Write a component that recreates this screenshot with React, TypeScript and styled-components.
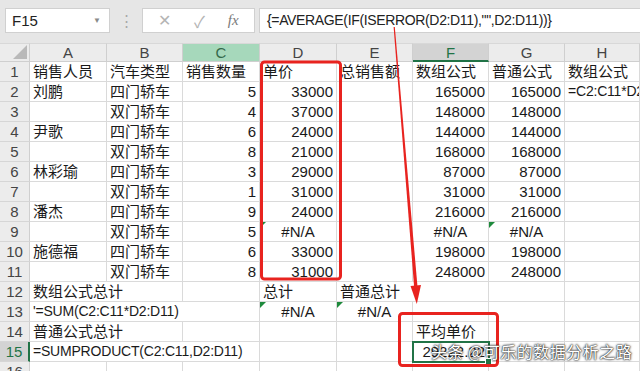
import styled, { createGlobalStyle } from "styled-components";

const GlobalStyle = createGlobalStyle`
	body {
		margin: 0;
		background: #ffffff;
		font-family: "Liberation Sans", "Noto Sans CJK SC", sans-serif;
	}
`;

const Page = styled.div`
	position: relative;
	width: 640px;
	height: 371px;
	overflow: hidden;
	background: #ffffff;
`;

// Formula bar on top
const TopBar = styled.div`
	display: flex;
	align-items: flex-start;
	height: 43px;
	padding: 8px 0 0 5px;
	box-sizing: border-box;
	background: #e6e6e6;
`;

const NameBox = styled.div`
	display: flex;
	align-items: center;
	justify-content: space-between;
	width: 105px;
	height: 25px;
	padding: 0 8px 0 6px;
	box-sizing: border-box;
	background: #fff;
	border: 1px solid #d0d0d0;
	font-size: 15px;
	color: #222;
`;

const Caret = styled.span`
	font-size: 8px;
	color: #8a8a8a;
`;

const Dots = styled.div`
	width: 32px;
	height: 25px;
	display: flex;
	align-items: center;
	justify-content: center;
	color: #a8a8a8;
	font-size: 15px;
`;

const FuncBox = styled.div`
	display: flex;
	align-items: center;
	justify-content: space-around;
	width: 113px;
	height: 25px;
	padding: 0 4px;
	box-sizing: border-box;
	background: #fff;
	border: 1px solid #d0d0d0;
	color: #b4b4b4;
	font-size: 16px;
`;

const Fx = styled.span`
	font-family: "Liberation Serif", serif;
	font-style: italic;
	font-size: 15px;
	color: #7a7a7a;
`;

const FormulaInput = styled.div`
	flex: 1;
	height: 25px;
	margin-left: 4px;
	padding-left: 7px;
	box-sizing: border-box;
	background: #fff;
	border: 1px solid #d0d0d0;
	border-right: none;
	font-size: 14px;
	letter-spacing: -0.35px;
	line-height: 23px;
	color: #222;
	white-space: nowrap;
	overflow: hidden;
`;

// Sheet grid
const Sheet = styled.div`
	display: grid;
	grid-template-columns: 30px 77px 76px 77px 77px 76px 76px 76px 1fr;
	grid-template-rows: 19px repeat(16, 20px);
	font-size: 15px;
	color: #1a1a1a;
`;

const Corner = styled.div`
	position: relative;
	background: #ececec;
	border-right: 1px solid #cfcfcf;
	border-bottom: 1px solid #cfcfcf;
	border-top: 1px solid #d8d8d8;
	box-sizing: border-box;
	overflow: hidden;

	&::after {
		content: "";
		position: absolute;
		right: 2px;
		bottom: 2px;
		border-left: 14px solid transparent;
		border-bottom: 14px solid #b9b9b9;
	}
`;

const ColHead = styled.div<{ $state?: "active" | "picked" }>`
	display: flex;
	align-items: center;
	justify-content: center;
	box-sizing: border-box;
	border-top: 1px solid #d8d8d8;
	border-right: 1px solid #cfcfcf;
	border-bottom: ${(p) => (p.$state === "active" ? "2px solid #217346" : "1px solid #cfcfcf")};
	background: ${(p) =>
		p.$state === "picked" ? "#a6d8bb" : p.$state === "active" ? "#d3d3d3" : "#ececec"};
	color: ${(p) => (p.$state === "active" ? "#217346" : p.$state === "picked" ? "#35694b" : "#444")};
	font-size: 15px;
`;

const RowHead = styled.div<{ $active?: boolean }>`
	display: flex;
	align-items: center;
	justify-content: center;
	box-sizing: border-box;
	border-bottom: 1px solid #d6d6d6;
	border-right: ${(p) => (p.$active ? "2px solid #217346" : "1px solid #cfcfcf")};
	background: ${(p) => (p.$active ? "#d3d3d3" : "#ececec")};
	color: ${(p) => (p.$active ? "#217346" : "#444")};
	font-size: 15px;
`;

const Cell = styled.div<{
	$align: string;
	$span: number;
	$selected?: boolean;
	$flag?: boolean;
	$formula?: boolean;
}>`
	position: relative;
	grid-column: span ${(p) => p.$span};
	box-sizing: border-box;
	padding: 0 3px;
	border-right: 1px solid #dadada;
	border-bottom: 1px solid #dadada;
	background: #fff;
	line-height: 19px;
	font-size: ${(p) => (p.$formula ? "14px" : "15px")};
	letter-spacing: ${(p) => (p.$formula ? "-0.2px" : "normal")};
	text-align: ${(p) => p.$align};
	white-space: nowrap;
	overflow: ${(p) => (p.$selected ? "visible" : "hidden")};
	outline: ${(p) => (p.$selected ? "2px solid #217346" : "none")};
	outline-offset: -1px;
	z-index: ${(p) => (p.$selected ? 2 : "auto")};

	&::before {
		content: "";
		display: ${(p) => (p.$flag ? "block" : "none")};
		position: absolute;
		left: 0;
		top: 0;
		border-top: 6px solid #1e8a3c;
		border-right: 6px solid transparent;
	}
`;

const FillHandle = styled.span`
	position: absolute;
	right: -4px;
	bottom: -4px;
	width: 5px;
	height: 5px;
	background: #217346;
	border: 1px solid #fff;
	z-index: 3;
`;

const Overlay = styled.svg`
	position: absolute;
	left: 0;
	top: 0;
	pointer-events: none;
	z-index: 5;
`;

const Watermark = styled.div`
	position: absolute;
	left: 431px;
	top: 339px;
	z-index: 6;
	font-family: "Noto Sans CJK SC", sans-serif;
	font-size: 16px;
	color: #ffffff;
	letter-spacing: 0.5px;
	text-shadow: 0 0 1px #222, 0 0 2px #222, 0 0 3px rgba(0, 0, 0, 0.6);
	white-space: nowrap;
`;

type Entry = string | { v: string; span: number };

const cols = ["A", "B", "C", "D", "E", "F", "G", "H"];

const rows: Entry[][] = [
	["销售人员", "汽车类型", "销售数量", "单价", "总销售额", "数组公式", "普通公式", "数组公式"],
	["刘鹏", "四门轿车", "5", "33000", "", "165000", "165000", "=C2:C11*D2:D11"],
	["", "双门轿车", "4", "37000", "", "148000", "148000", ""],
	["尹歌", "四门轿车", "6", "24000", "", "144000", "144000", ""],
	["", "双门轿车", "8", "21000", "", "168000", "168000", ""],
	["林彩瑜", "四门轿车", "3", "29000", "", "87000", "87000", ""],
	["", "双门轿车", "1", "31000", "", "31000", "31000", ""],
	["潘杰", "四门轿车", "9", "24000", "", "216000", "216000", ""],
	["", "双门轿车", "5", "#N/A", "", "#N/A", "#N/A", ""],
	["施德福", "四门轿车", "6", "33000", "", "198000", "198000", ""],
	["", "双门轿车", "8", "31000", "", "248000", "248000", ""],
	[{ v: "数组公式总计", span: 2 }, "", "总计", { v: "普通总计", span: 2 }, "", ""],
	[{ v: "'=SUM(C2:C11*D2:D11)", span: 3 }, "#N/A", "#N/A", "", "", ""],
	[{ v: "普通公式总计", span: 2 }, "", "", "", "平均单价", "", ""],
	[{ v: "=SUMPRODUCT(C2:C11,D2:D11)", span: 3 }, "", "", "29222.22", "", ""],
	["", "", "", "", "", "", "", ""],
];

// cells that carry the green error flag (row-col)
const flagged = ["9-3", "9-6", "13-3", "13-4"];

function alignOf(v: string) {
	if (/^\d+(\.\d+)?$/.test(v)) return "right";
	if (v.startsWith("#")) return "center";
	return "left";
}

export default function App() {
	return (
		<Page>
			<GlobalStyle />
			<TopBar>
				<NameBox>
					F15
					<Caret>▼</Caret>
				</NameBox>
				<Dots>⋮</Dots>
				<FuncBox>
					<span>✕</span>
					<span>✓</span>
					<Fx>fx</Fx>
				</FuncBox>
				<FormulaInput>{'{=AVERAGE(IF(ISERROR(D2:D11),"",D2:D11))}'}</FormulaInput>
			</TopBar>

			<Sheet>
				<Corner />
				{cols.map((c) => (
					<ColHead key={c} $state={c === "F" ? "active" : c === "C" ? "picked" : undefined}>
						{c}
					</ColHead>
				))}
				{rows.map((row, r) => {
					const n = r + 1;
					let col = 0;
					return [
						<RowHead key={`h${n}`} $active={n === 15}>
							{n}
						</RowHead>,
						...row.map((e) => {
							const v = typeof e === "string" ? e : e.v;
							const span = typeof e === "string" ? 1 : e.span;
							const c = col;
							col += span;
							const selected = n === 15 && c === 5;
							return (
								<Cell
									key={`${n}-${c}`}
									$align={alignOf(v)}
									$span={span}
									$selected={selected}
									$flag={flagged.includes(`${n}-${c}`)}
									$formula={/^'?=/.test(v)}
								>
									{v}
									{selected && <FillHandle />}
								</Cell>
							);
						}),
					];
				})}
			</Sheet>

			<Overlay width="640" height="371" viewBox="0 0 640 371">
				<rect x="261.5" y="62" width="79" height="217" rx="3" fill="none" stroke="#e8231f" strokeWidth="3" />
				<rect x="399.5" y="313.5" width="98" height="52" rx="3" fill="none" stroke="#e8231f" strokeWidth="3" />
				<polygon points="393.6,27 394.8,27 417.6,288 414.2,288" fill="#e8231f" />
				<polygon points="410.5,286 421,285 416.8,304" fill="#e8231f" />
			</Overlay>
			<Watermark>头条 @可乐的数据分析之路</Watermark>
		</Page>
	);
}
